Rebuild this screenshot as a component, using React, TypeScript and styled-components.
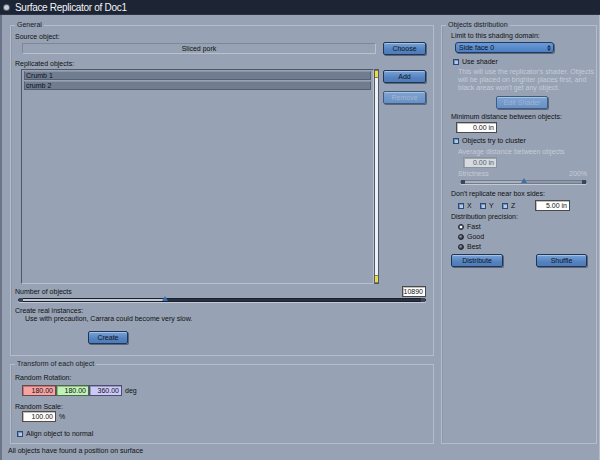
import React from "react";
import styled, { createGlobalStyle } from "styled-components";

const GlobalStyle = createGlobalStyle`
  html, body { margin: 0; padding: 0; }
  body {
    background: #97a2b4;
    font-family: "Liberation Sans", Arial, sans-serif;
    font-size: 7px;
    color: #111;
  }
  * { box-sizing: border-box; }
`;

const Window = styled.div`
  width: 600px;
  height: 460px;
  display: flex;
  flex-direction: column;
  background: #97a2b4;
  overflow: hidden;
`;

const TitleBar = styled.div`
  height: 15px;
  flex: none;
  background: #1d2535;
  border-bottom: 1px solid #2c3548;
  display: flex;
  align-items: center;
  padding-left: 4px;
  gap: 6px;
  color: #f2f4f8;
  font-size: 10px;
  letter-spacing: -0.3px;
`;

const CloseDot = styled.span`
  width: 5px;
  height: 5px;
  border-radius: 50%;
  background: #c9ced8;
  box-shadow: 0 0 0 1px #59616f;
`;

const Body = styled.div`
  flex: 1;
  display: flex;
  flex-direction: column;
  border-left: 2px solid #6b7587;
  border-right: 1px solid #b3bcc8;
  padding: 6px 2px 0 8px;
`;

const Columns = styled.div`
  height: 423px;
  display: grid;
  grid-template-columns: 424px 156px;
  column-gap: 7px;
`;

const LeftColumn = styled.div`
  display: flex;
  flex-direction: column;
  gap: 4px;
  min-height: 0;
`;

const Group = styled.fieldset<{ $h?: number; $pl: number; $pr: number }>`
  margin: 0;
  min-width: 0;
  border: 1px solid #b4bdc9;
  box-shadow: inset 1px 0 0 #8b96a7;
  padding: 0 ${(p) => p.$pr}px 0 ${(p) => p.$pl}px;
  display: flex;
  flex-direction: column;
  ${(p) => (p.$h ? `height: ${p.$h}px; flex: none;` : "flex: 1;")}
`;

const Legend = styled.legend<{ $ml?: number }>`
  padding: 0 2px;
  margin-left: ${(p) => p.$ml ?? 0}px;
  font-size: 7px;
  line-height: 8px;
  color: #1a1e26;
`;

const Label = styled.div<{ $mt?: number; $ml?: number; $muted?: boolean }>`
  font-size: 7px;
  line-height: 8px;
  height: 8px;
  white-space: nowrap;
  margin-top: ${(p) => p.$mt ?? 0}px;
  margin-left: ${(p) => p.$ml ?? 0}px;
  color: ${(p) => (p.$muted ? "#c6ccd6" : "#111")};
`;

const Row = styled.div<{ $mt?: number; $ml?: number; $gap?: number; $between?: boolean }>`
  display: flex;
  align-items: center;
  margin-top: ${(p) => p.$mt ?? 0}px;
  margin-left: ${(p) => p.$ml ?? 0}px;
  gap: ${(p) => p.$gap ?? 0}px;
  justify-content: ${(p) => (p.$between ? "space-between" : "flex-start")};
`;

const SourceField = styled.div`
  width: 354px;
  height: 11px;
  border: 1px solid #b9c1cc;
  border-top-color: #7d8899;
  border-left-color: #7d8899;
  text-align: center;
  line-height: 9px;
  font-size: 7px;
  color: #111;
`;

const Button = styled.button<{ $w: number; $off?: boolean }>`
  width: ${(p) => p.$w}px;
  height: 13px;
  padding: 0;
  font-family: "Liberation Sans", Arial, sans-serif;
  font-size: 7px;
  line-height: 11px;
  border-radius: 2px;
  border: 1px solid ${(p) => (p.$off ? "#3d5a82" : "#1f3658")};
  background: ${(p) =>
    p.$off
      ? "linear-gradient(#7ea4d3, #6890c4)"
      : "linear-gradient(#78a2d6, #5583c0 60%, #4f7cb8)"};
  color: ${(p) => (p.$off ? "#a3b6cf" : "#0d1420")};
  box-shadow: 1px 1px 0 #5a6576, inset 0 1px 0 rgba(255, 255, 255, 0.35);
  flex: none;
`;

const ListRow = styled.div`
  margin-top: 1px;
  margin-left: 6px;
  display: flex;
  align-items: flex-start;
  height: 215px;
`;

const ListBox = styled.div`
  width: 353px;
  height: 215px;
  border: 1px solid #b9c1cc;
  border-top-color: #4f5868;
  border-left-color: #4f5868;
  padding: 1px 2px;
  display: flex;
  flex-direction: column;
  gap: 1px;
`;

const ListItem = styled.div`
  height: 9px;
  background: #707c8f;
  border: 1px solid #566072;
  border-top-color: #8994a5;
  line-height: 7px;
  padding-left: 1px;
  font-size: 7px;
  color: #0e1117;
`;

const ScrollTrack = styled.div`
  width: 5px;
  height: 215px;
  background: #eef1f5;
  border: 1px solid #4f5868;
  display: flex;
  flex-direction: column;
  justify-content: space-between;
`;

const ScrollCap = styled.div`
  height: 8px;
  background: #e9db4c;
  border-bottom: 1px solid #8f8420;
  border-top: 1px solid #8f8420;
`;

const SideButtons = styled.div`
  margin-left: 4px;
  padding-top: 1px;
  display: flex;
  flex-direction: column;
  gap: 8px;
`;

const NumberInput = styled.div<{ $w: number; $bg?: string; $fg?: string; $border?: string }>`
  width: ${(p) => p.$w}px;
  height: 11px;
  background: ${(p) => p.$bg ?? "#ffffff"};
  border: 1px solid ${(p) => p.$border ?? "#4a4a4a"};
  box-shadow: inset 1px 1px 0 rgba(0, 0, 0, 0.25);
  text-align: right;
  padding-right: 2px;
  font-size: 7px;
  line-height: 9px;
  color: ${(p) => p.$fg ?? "#111"};
  flex: none;
`;

const SliderTrack = styled.div<{ $ml?: number; $mt?: number; $muted?: boolean }>`
  position: relative;
  margin-left: ${(p) => p.$ml ?? 0}px;
  margin-top: ${(p) => p.$mt ?? 0}px;
  height: 4px;
  border-radius: 2px;
  background: ${(p) => (p.$muted ? "#8e98a8" : "#27303f")};
  border: 1px solid ${(p) => (p.$muted ? "#717b8c" : "#1a202c")};
  box-shadow: 0 1px 0 #c3cad5;
`;

const SliderFill = styled.div<{ $muted?: boolean }>`
  height: 100%;
  background: ${(p) => (p.$muted ? "#a9b2bf" : "#c1c9d4")};
`;

const SliderEnd = styled.span<{ $side: "left" | "right" }>`
  position: absolute;
  top: -1px;
  ${(p) => p.$side}: 0;
  width: 4px;
  height: 4px;
  background: #3e4655;
`;

const SliderThumb = styled.span`
  position: absolute;
  top: -3px;
  width: 0;
  height: 0;
  margin-left: -3px;
  border-left: 3px solid transparent;
  border-right: 3px solid transparent;
  border-bottom: 5px solid #3f6fae;
`;

const CheckBox = styled.span`
  width: 6px;
  height: 6px;
  border: 1px solid #2a4a77;
  background: #b9c8dc;
  box-shadow: inset 1px 1px 0 #6f93c2;
  flex: none;
`;

const CheckLabel = styled.label<{ $mt?: number; $ml?: number; $w?: number }>`
  display: flex;
  align-items: center;
  gap: 3px;
  height: 8px;
  font-size: 7px;
  line-height: 8px;
  margin-top: ${(p) => p.$mt ?? 0}px;
  margin-left: ${(p) => p.$ml ?? 0}px;
  ${(p) => (p.$w ? `width: ${p.$w}px;` : "")}
  white-space: nowrap;
`;

const Radio = styled.span<{ $on?: boolean }>`
  width: 6px;
  height: 6px;
  border-radius: 50%;
  flex: none;
  border: 1px solid #1f2530;
  background: ${(p) =>
    p.$on
      ? "radial-gradient(circle at 50% 50%, #ffffff 35%, #6a7282 45%)"
      : "radial-gradient(circle at 35% 35%, #8c93a0 10%, #2b313c 70%)"};
`;

const Note = styled.div<{ $ml?: number; $mt?: number }>`
  font-size: 7px;
  line-height: 8px;
  white-space: nowrap;
  color: #c6ccd6;
  margin-left: ${(p) => p.$ml ?? 0}px;
  margin-top: ${(p) => p.$mt ?? 0}px;
`;

const Dropdown = styled.div`
  margin-top: 2px;
  margin-left: 4px;
  width: 99px;
  height: 11px;
  border-radius: 3px;
  border: 1px solid #1f3a63;
  background: linear-gradient(#6a9ad6, #4c7fc2);
  box-shadow: 1px 1px 0 #5a6576;
  display: flex;
  align-items: center;
  justify-content: space-between;
  padding: 0 2px 0 3px;
  font-size: 7px;
  color: #0d1420;
`;

const Status = styled.div`
  padding-top: 3px;
  margin-left: -2px;
  font-size: 7px;
  line-height: 8px;
  color: #111;
`;

const UpDown: React.FC = () => (
  <svg width="4" height="6" viewBox="0 0 4 6">
    <path d="M0 2.5 L2 0 L4 2.5 Z M0 3.5 L2 6 L4 3.5 Z" fill="#1a2a44" />
  </svg>
);

const App: React.FC = () => (
  <>
    <GlobalStyle />
    <Window>
      <TitleBar>
        <CloseDot />
        Surface Replicator of Doc1
      </TitleBar>
      <Body>
        <Columns>
          <LeftColumn>
            <Group $pl={4} $pr={7}>
              <Legend>General</Legend>
              <Label $mt={4}>Source object:</Label>
              <Row $mt={1} $ml={7} $gap={7}>
                <SourceField>Sliced pork</SourceField>
                <Button $w={43}>Choose</Button>
              </Row>
              <Label $mt={5}>Replicated objects:</Label>
              <ListRow>
                <ListBox>
                  <ListItem>Crumb 1</ListItem>
                  <ListItem>crumb 2</ListItem>
                </ListBox>
                <ScrollTrack>
                  <ScrollCap />
                  <ScrollCap />
                </ScrollTrack>
                <SideButtons>
                  <Button $w={43}>Add</Button>
                  <Button $w={43} $off>
                    Remove
                  </Button>
                </SideButtons>
              </ListRow>
              <Row $mt={2} $between>
                <Label>Number of objects</Label>
                <NumberInput $w={24}>10890</NumberInput>
              </Row>
              <SliderTrack $ml={3} $mt={1}>
                <SliderFill style={{ width: "36%" }} />
                <SliderEnd $side="left" />
                <SliderEnd $side="right" />
                <SliderThumb style={{ left: "36%" }} />
              </SliderTrack>
              <Label $mt={5}>Create real instances:</Label>
              <Label $ml={10}>Use with precaution, Carrara could become very slow.</Label>
              <Row $mt={8} $ml={73}>
                <Button $w={40}>Create</Button>
              </Row>
            </Group>
            <Group $h={84} $pl={4} $pr={7}>
              <Legend>Transform of each object</Legend>
              <Label $mt={6}>Random Rotation:</Label>
              <Row $mt={3} $ml={7} $gap={3}>
                <Row>
                  <NumberInput $w={34} $bg="#f7a3a3" $border="#6b4848">
                    180.00
                  </NumberInput>
                  <NumberInput $w={33} $bg="#bff2b6" $border="#4c6a4a">
                    180.00
                  </NumberInput>
                  <NumberInput $w={33} $bg="#cbc9f7" $border="#4f4c74">
                    360.00
                  </NumberInput>
                </Row>
                <span>deg</span>
              </Row>
              <Label $mt={7}>Random Scale:</Label>
              <Row $ml={7} $gap={3}>
                <NumberInput $w={34} $border="#5a4a3a">
                  100.00
                </NumberInput>
                <span>%</span>
              </Row>
              <CheckLabel $mt={8} $ml={2}>
                <CheckBox />
                Align object to normal
              </CheckLabel>
            </Group>
          </LeftColumn>
          <Group $pl={9} $pr={9}>
            <Legend $ml={-5}>Objects distribution</Legend>
            <Label $mt={3}>Limit to this shading domain:</Label>
            <Dropdown>
              Side face 0
              <UpDown />
            </Dropdown>
            <CheckLabel $mt={5} $ml={2}>
              <CheckBox />
              Use shader
            </CheckLabel>
            <Note $ml={7} $mt={2}>
              This will use the replicator's shader. Objects
              <br />
              will be placed on brighter places first, and
              <br />
              black areas won't get any object.
            </Note>
            <Row $mt={4} $ml={45}>
              <Button $w={52} $off>
                Edit Shader
              </Button>
            </Row>
            <Label $mt={4}>Minimum distance between objects:</Label>
            <Row $mt={1} $ml={5}>
              <NumberInput $w={41}>0.00 in</NumberInput>
            </Row>
            <CheckLabel $mt={4} $ml={2}>
              <CheckBox />
              Objects try to cluster
            </CheckLabel>
            <Label $mt={3} $ml={7} $muted>
              Average distance between objects
            </Label>
            <Row $mt={1} $ml={12}>
              <NumberInput $w={34} $bg="#d6dbe2" $fg="#555c66" $border="#8a929e">
                0.00 in
              </NumberInput>
            </Row>
            <Row $mt={2} $ml={7} $between>
              <Label $muted>Strictness</Label>
              <Label $muted>200%</Label>
            </Row>
            <SliderTrack $ml={9} $mt={2} $muted>
              <SliderFill $muted style={{ width: "50%" }} />
              <SliderEnd $side="left" />
              <SliderEnd $side="right" />
              <SliderThumb style={{ left: "50%" }} />
            </SliderTrack>
            <Label $mt={6}>Don't replicate near box sides:</Label>
            <Row $mt={2} $ml={7}>
              <CheckLabel $w={22}>
                <CheckBox />X
              </CheckLabel>
              <CheckLabel $w={22}>
                <CheckBox />Y
              </CheckLabel>
              <CheckLabel $w={33}>
                <CheckBox />Z
              </CheckLabel>
              <NumberInput $w={35}>5.00 in</NumberInput>
            </Row>
            <Label $mt={2}>Distribution precision:</Label>
            <CheckLabel $mt={2} $ml={7}>
              <Radio $on />
              Fast
            </CheckLabel>
            <CheckLabel $mt={2} $ml={7}>
              <Radio />
              Good
            </CheckLabel>
            <CheckLabel $mt={2} $ml={7}>
              <Radio />
              Best
            </CheckLabel>
            <Row $mt={3} $between>
              <Button $w={52}>Distribute</Button>
              <Button $w={51}>Shuffle</Button>
            </Row>
          </Group>
        </Columns>
        <Status>All objects have found a position on surface</Status>
      </Body>
    </Window>
  </>
);

export default App;
